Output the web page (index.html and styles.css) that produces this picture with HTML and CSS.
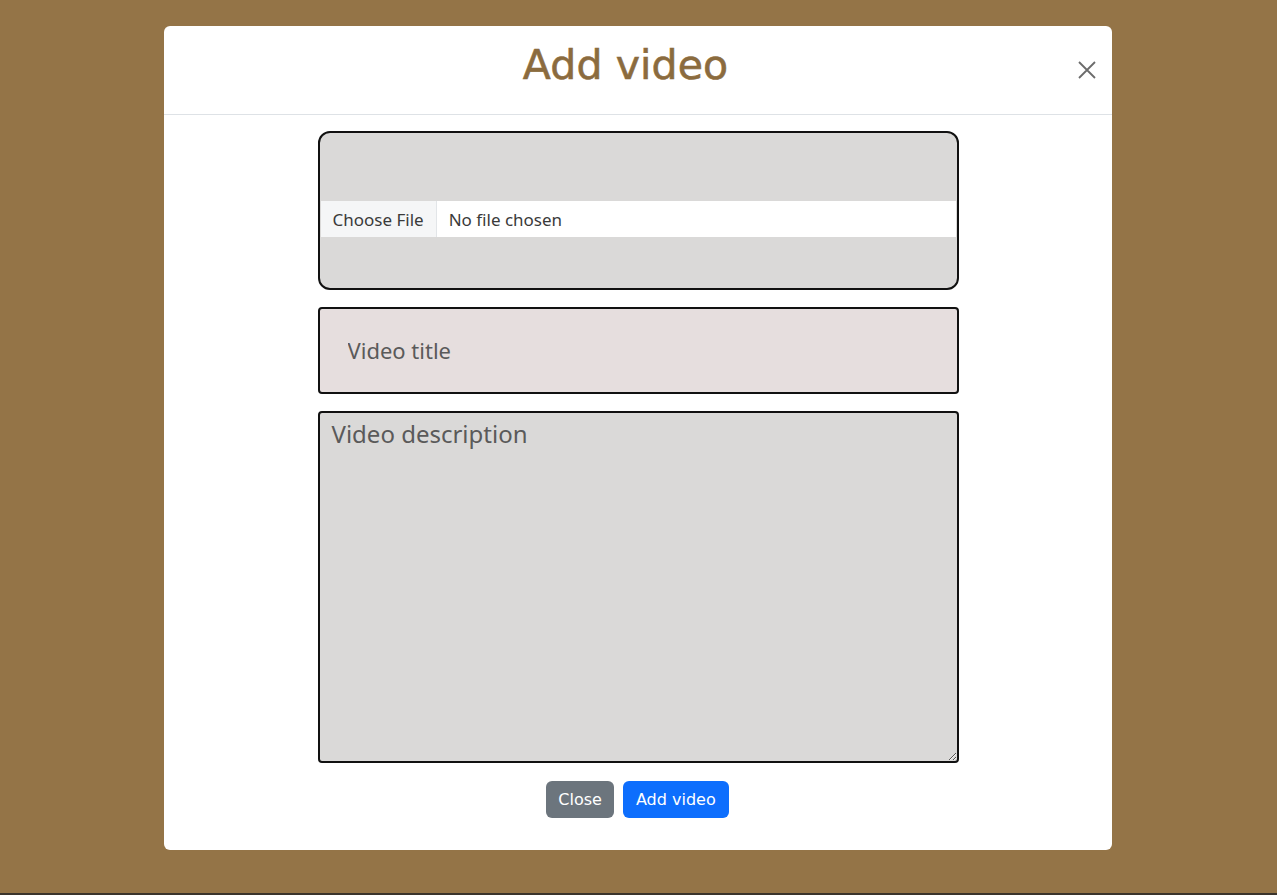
FILE: index.html
```html
<!DOCTYPE html>
<html lang="en">
<head>
<meta charset="utf-8">
<title>Add video</title>
<link rel="stylesheet" href="styles.css">
</head>
<body>
<div class="backdrop">
  <div class="modal">
    <div class="modal-header">
      <h1 class="modal-title">Add video</h1>
      <button class="btn-close" type="button" aria-label="Close">
        <svg width="18" height="18" viewBox="0 0 18 18"><path d="M1 1L17 17M17 1L1 17" stroke="#6b6b6b" stroke-width="1.8" fill="none"/></svg>
      </button>
    </div>
    <form class="modal-body">
      <div class="file-box">
        <input class="file-input" type="file">
      </div>
      <input class="title-input" type="text" placeholder="Video title">
      <textarea class="desc-input" placeholder="Video description"></textarea>
      <div class="actions">
        <button class="btn btn-secondary" type="button">Close</button>
        <button class="btn btn-primary" type="button">Add video</button>
      </div>
    </form>
  </div>
</div>
</body>
</html>
```

FILE: styles.css
```css
* { box-sizing: border-box; }
html, body { margin: 0; padding: 0; height: 100%; }
body {
  background: #947447;
  font-family: "Noto Sans", "Open Sans", sans-serif;
}
.backdrop {
  height: 895px;
  padding-top: 26px;
  display: flex;
  justify-content: center;
  border-bottom: 2px solid #3a342c;
}
.modal {
  width: 948px;
  height: 824px;
  margin-left: -1px;
  background: #fff;
  border-radius: 6px;
  display: flex;
  flex-direction: column;
}
.modal-header {
  height: 89px;
  border-bottom: 1px solid #dee2e6;
  display: flex;
  align-items: center;
  justify-content: center;
  position: relative;
}
.modal-title {
  margin: 0 25px 10px 0;
  font-family: "DejaVu Sans", sans-serif;
  font-weight: 500;
  font-size: 41px;
  color: #8b6b3e;
  letter-spacing: 0.1px;
  -webkit-text-stroke: 0.6px #8b6b3e;
}
.btn-close {
  position: absolute;
  right: 16px;
  top: 35px;
  border: 0;
  background: transparent;
  padding: 0;
  width: 18px;
  height: 18px;
  cursor: pointer;
}
.modal-body {
  padding: 16px 0 0;
  display: flex;
  flex-direction: column;
  align-items: center;
  gap: 17px;
}
.file-box {
  width: 641px;
  height: 159px;
  background: #dad9d8;
  border: 2px solid #111;
  border-radius: 12px;
  display: flex;
  align-items: flex-start;
}
.file-input {
  width: 100%;
  height: 36px;
  margin: 68px 1px 0;
  background: #fff;
  border: 0;
  font-family: "Noto Sans", sans-serif;
  font-size: 17px;
  color: #3a3a3a;
  padding: 0 12px 0 0;
}
.file-input::file-selector-button {
  height: 36px;
  margin: 0 12px 0 0;
  padding: 0 12px;
  border: 0;
  border-right: 1px solid #e2e5e8;
  border-radius: 0;
  background: #f5f6f7;
  font-family: "Noto Sans", sans-serif;
  font-size: 17px;
  color: #3a3a3a;
}
.title-input {
  width: 641px;
  height: 87px;
  background: #e6dede;
  border: 2px solid #111;
  border-radius: 4px;
  padding: 0 28px 2px;
  font-family: "Noto Sans", sans-serif;
  font-size: 22px;
  color: #333;
}
.title-input::placeholder { color: #5a5a5a; }
.desc-input {
  width: 641px;
  height: 352px;
  background: #dad9d8;
  border: 2px solid #111;
  border-radius: 4px;
  padding: 4px 12px;
  font-family: "Noto Sans", sans-serif;
  font-size: 24px;
  color: #333;
  resize: vertical;
}
.desc-input::placeholder { color: #5a5a5a; }
.actions {
  display: flex;
  gap: 9px;
  margin-top: 1px;
  margin-left: -1px;
}
.btn {
  height: 37px;
  padding: 0 12px;
  border: 0;
  border-radius: 6px;
  color: #fff;
  font-family: "DejaVu Sans", sans-serif;
  font-size: 16px;
  cursor: pointer;
}
.btn-secondary { background: #6c757d; }
.btn-primary { background: #0d6efd; padding: 0 13px; }
```
